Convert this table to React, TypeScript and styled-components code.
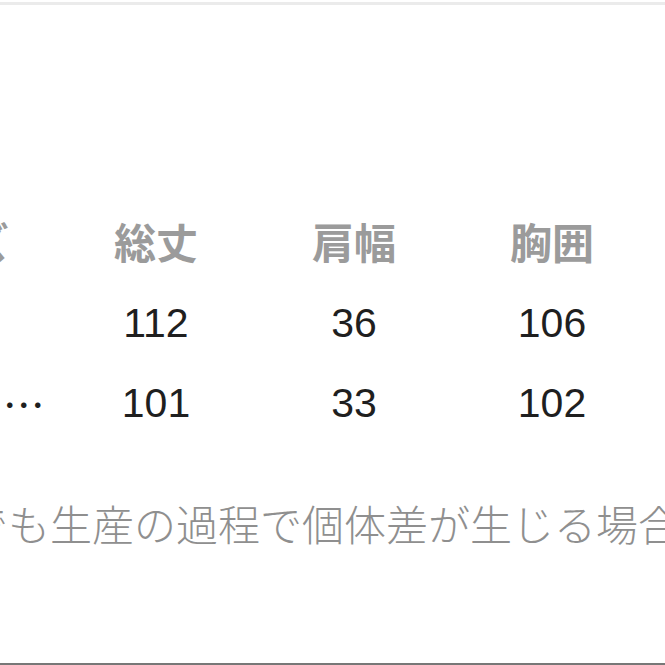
import React from 'react';
import styled, { createGlobalStyle } from 'styled-components';

const GlobalStyle = createGlobalStyle`
  html, body {
    margin: 0;
    padding: 0;
    background: #ffffff;
  }
`;

const columns = ['総丈', '肩幅', '胸囲'];

const rows = [
  { label: 'Ｓ', values: [112, 36, 106] },
  { label: 'Ｍサイズ（参考）', values: [101, 33, 102] },
];

export default function App() {
  return (
    <>
      <GlobalStyle />
      <Frame>
        <TopRule />
        <Body>
          <SizeTable>
            <LabelCell $head>サイズ</LabelCell>
            {columns.map((c) => (
              <HeadCell key={c}>{c}</HeadCell>
            ))}
            {rows.map((r) => (
              <React.Fragment key={r.label}>
                <LabelCell>{r.label}</LabelCell>
                {r.values.map((v, i) => (
                  <ValueCell key={i}>{v}</ValueCell>
                ))}
              </React.Fragment>
            ))}
          </SizeTable>
          <Note>でも生産の過程で個体差が生じる場合があります。</Note>
        </Body>
        <BottomRule />
      </Frame>
    </>
  );
}

const Frame = styled.div`
  width: 665px;
  height: 665px;
  overflow: hidden;
  display: flex;
  flex-direction: column;
  background: #ffffff;
  font-family: 'Noto Sans CJK JP', 'Noto Sans', sans-serif;
`;

const TopRule = styled.div`
  flex: none;
  height: 3px;
  margin-top: 2px;
  background: #ebebeb;
`;

const Body = styled.div`
  flex: 1;
  display: flex;
  flex-direction: column;
`;

const SizeTable = styled.div`
  display: grid;
  grid-template-columns: repeat(4, 198px);
  grid-auto-rows: 80px;
  margin: 198px 0 0 -141px;
`;

const HeadCell = styled.div`
  font-size: 42px;
  line-height: 76px;
  font-weight: 700;
  color: #9b9b9b;
  text-align: center;
  white-space: nowrap;
`;

const LabelCell = styled.div<{ $head?: boolean }>`
  font-size: 42px;
  line-height: ${(p) => (p.$head ? '76px' : '80px')};
  font-weight: ${(p) => (p.$head ? 700 : 400)};
  color: ${(p) => (p.$head ? '#9b9b9b' : '#1f1f1f')};
  padding: ${(p) => (p.$head ? '0 25px 0 25px' : '0 11px 0 19px')};
  text-align: left;
  white-space: nowrap;
  overflow: hidden;
  text-overflow: ellipsis;
`;

const ValueCell = styled.div`
  font-family: 'Liberation Sans', Arial, sans-serif;
  font-size: 41px;
  line-height: 80px;
  color: #1f1f1f;
  text-align: center;
`;

const Note = styled.p`
  margin: 50px 0 0 -34px;
  font-size: 42px;
  line-height: 60px;
  font-weight: 300;
  color: #8f8f8f;
  white-space: nowrap;
`;

const BottomRule = styled.div`
  flex: none;
  height: 2px;
  background: #777777;
`;
